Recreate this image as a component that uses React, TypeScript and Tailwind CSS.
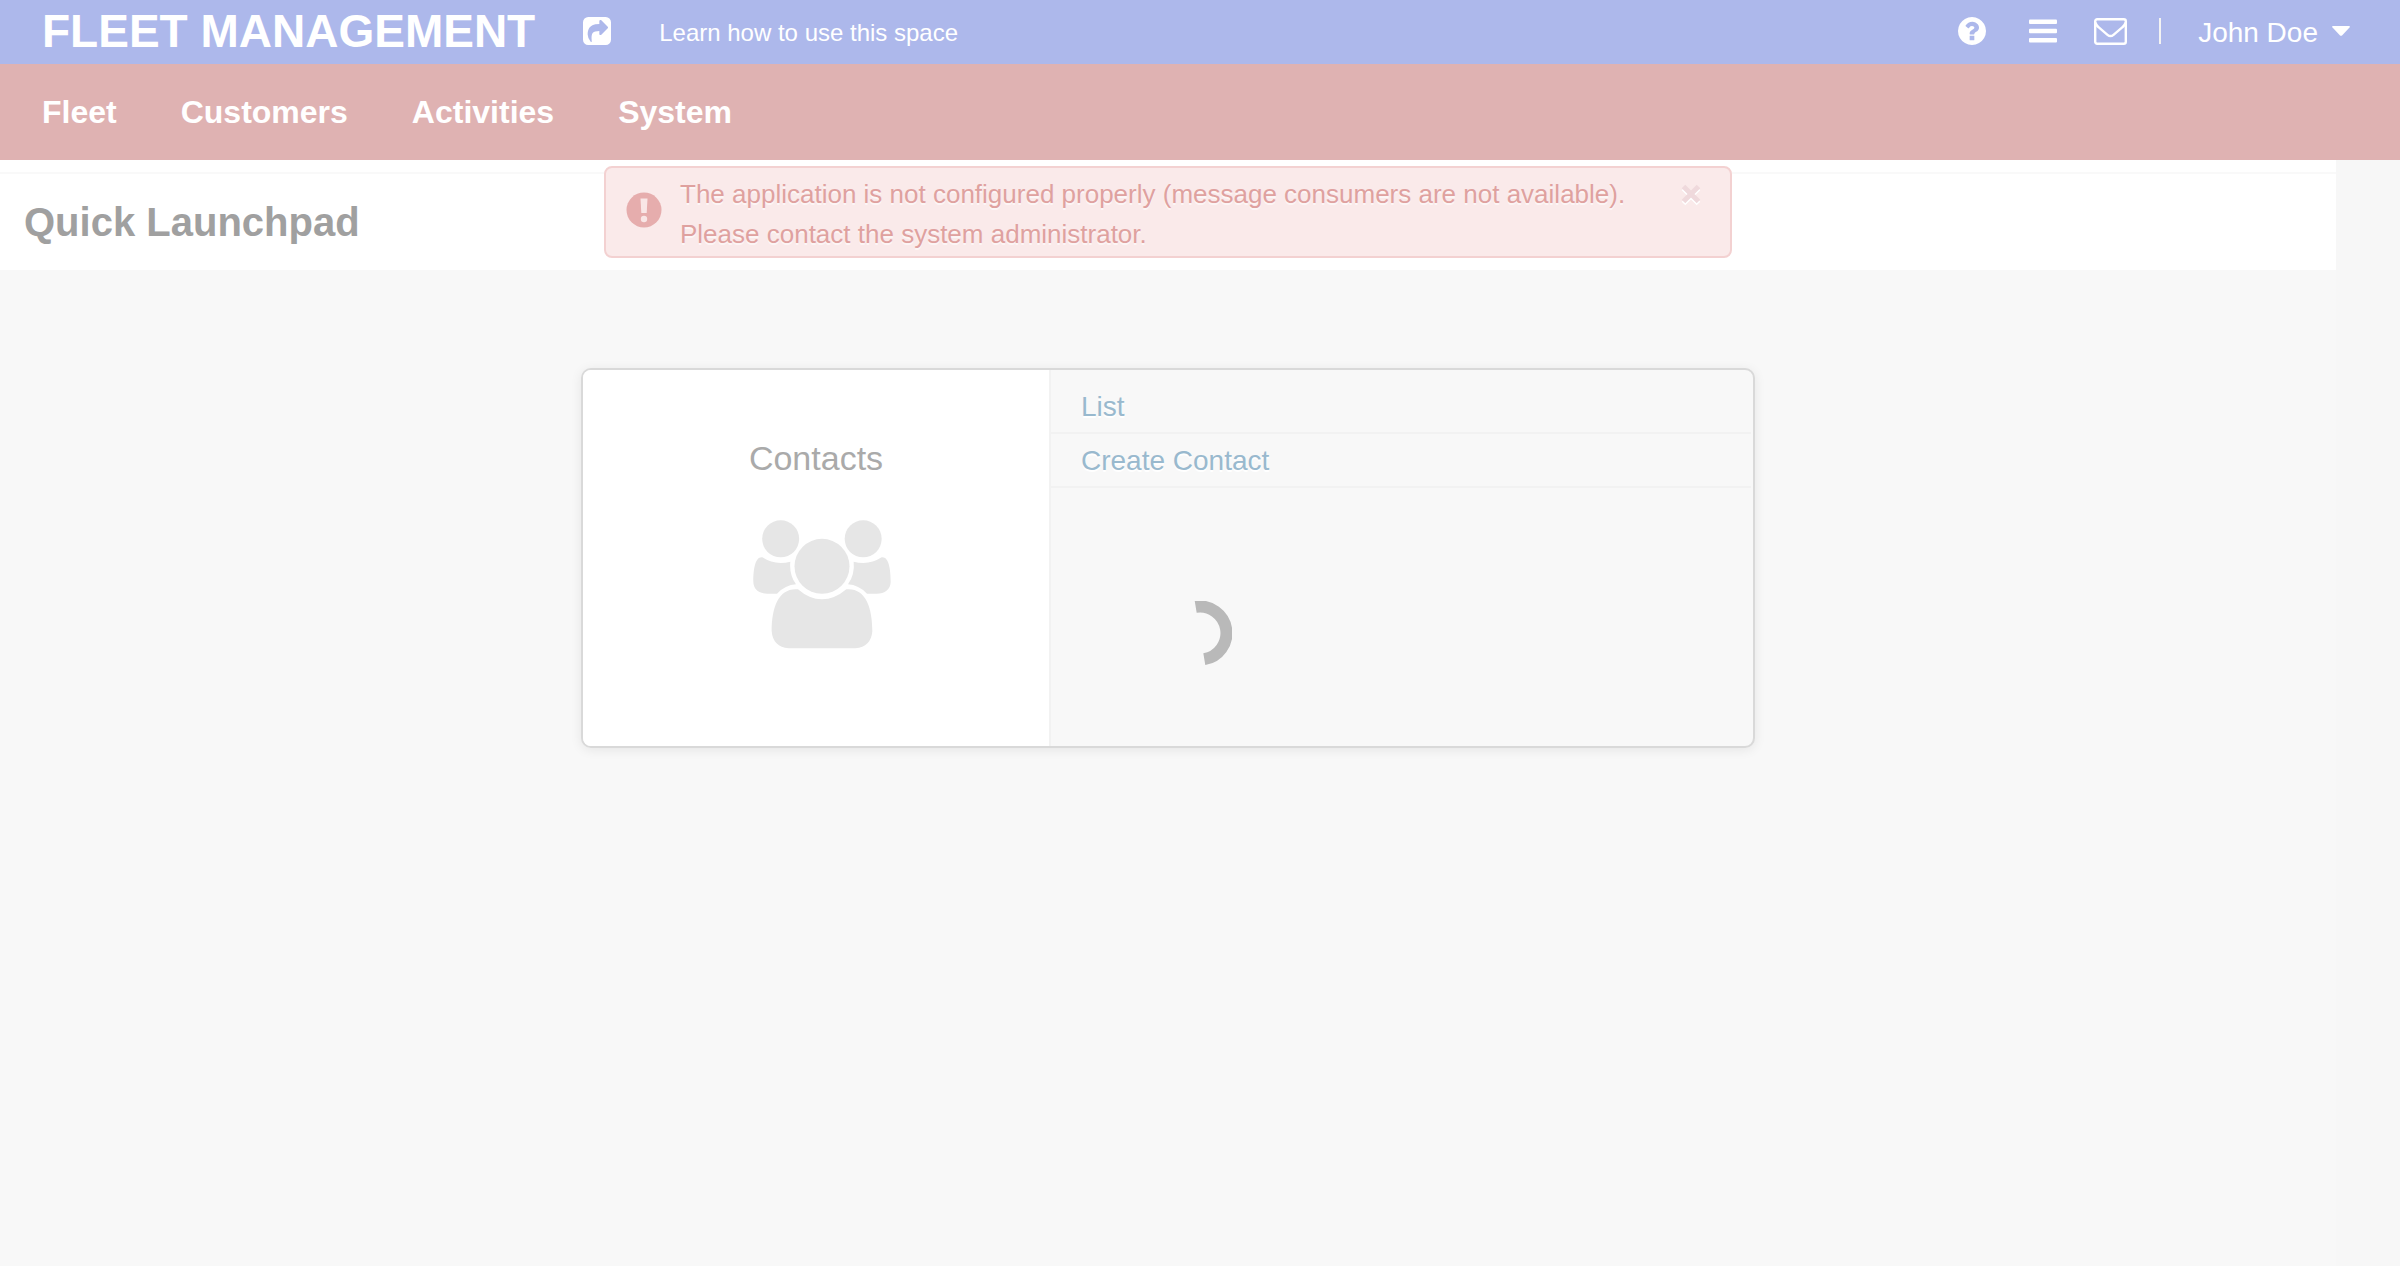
import type { ReactNode } from "react";

const NAV_ITEMS = ["Fleet", "Customers", "Activities", "System"];
const CONTACT_LINKS = ["List", "Create Contact"];

function ShareIcon() {
  return (
    <svg viewBox="0 0 1536 1536" className="size-7 fill-current" fillRule="evenodd" aria-hidden="true">
      <path d="M1005 973l352-352q19-19 19-45t-19-45l-352-352q-30-31-69-14-40 17-40 59v160q-119 0-216 19.5t-162.5 51-114 79-76.5 95.5-44.5 109-21.5 111.5-5 110.5q0 181 167 404 10 12 25 12 7 0 13-3 22-9 19-33-44-354 62-473 46-52 130-75.5t224-23.5v160q0 42 40 59 12 5 24 5 26 0 45-19zM1536 288v960q0 119-84.5 203.5t-203.5 84.5h-960q-119 0-203.5-84.5t-84.5-203.5v-960q0-119 84.5-203.5t203.5-84.5h960q119 0 203.5 84.5t84.5 203.5z" />
    </svg>
  );
}

function HelpIcon() {
  return (
    <svg viewBox="128 128 1536 1536" className="size-7 fill-current" aria-hidden="true">
      <path d="M1024 1376v-192q0-14-9-23t-23-9h-192q-14 0-23 9t-9 23v192q0 14 9 23t23 9h192q14 0 23-9t9-23zm256-672q0-88-55.5-163t-138.5-116-170-41q-243 0-371 213-15 24 8 42l132 100q7 6 19 6 16 0 25-12 53-68 86-92 34-24 86-24 48 0 85.5 26t37.5 59q0 38-20 61t-68 45q-63 28-115.5 86.5t-52.5 125.5v36q0 14 9 23t23 9h192q14 0 23-9t9-23q0-19 21.5-49.5t54.5-49.5q32-18 49-28.5t46-35 44.5-48 28-60.5 12.5-81zm384 192q0 209-103 385.5t-279.5 279.5-385.5 103-385.5-103-279.5-279.5-103-385.5 103-385.5 279.5-279.5 385.5-103 385.5 103 279.5 279.5 103 385.5z" />
    </svg>
  );
}

function MenuIcon() {
  return (
    <svg viewBox="0 0 28 28" className="size-7 fill-current" aria-hidden="true">
      <rect x="0" y="2.500" width="28" height="4.600" rx="1" />
      <rect x="0" y="11.700" width="28" height="4.600" rx="1" />
      <rect x="0" y="20.900" width="28" height="4.600" rx="1" />
    </svg>
  );
}

function MailIcon() {
  return (
    <svg
      viewBox="0 0 33 27"
      className="h-[27px] w-[33px] stroke-current"
      fill="none"
      strokeWidth="2.400"
      strokeLinejoin="round"
      aria-hidden="true"
    >
      <rect x="1.200" y="1.200" width="30.600" height="24.600" rx="2" />
      <path d="M1.500 4.500Q2 7.200 4.500 9.200L13.500 16.800Q16.500 19.400 19.500 16.800L28.500 9.200Q31 7.200 31.500 4.500" />
    </svg>
  );
}

function PeopleIcon() {
  return (
    <svg viewBox="548 509 414 387" className="h-[129px] w-[138px] fill-[#e6e6e6]" aria-hidden="true">
      <circle cx="631" cy="565.500" r="55.500" />
      <circle cx="878.500" cy="565.500" r="55.500" />
      <circle cx="755" cy="648" r="82.500" />
      <path d="M576 621Q602 638 631 638Q646 638 660 634Q656 672 677 702Q645 704 620 730H592C566 730 549 716 549 694C549 652 556 618 576 621Z" />
      <path d="M934 621Q908 638 879 638Q864 638 850 634Q854 672 833 702Q865 704 890 730H918C944 730 961 716 961 694C961 652 954 618 934 621Z" />
      <path d="M683 717Q717 747 755 747Q793 747 828 717C885 712 906 770 906 843Q902 890 855 894H655Q608 890 604 843C604 770 625 712 683 717Z" />
    </svg>
  );
}

function AlertIcon() {
  return (
    <svg viewBox="0 0 36 36" className="mt-[18px] size-9 shrink-0" aria-hidden="true">
      <circle cx="18" cy="18" r="17.500" fill="#e6adad" />
      <path d="M14.500 6.500h7l-.8 14.500h-5.400z" fill="#f9e6e6" />
      <circle cx="18" cy="27" r="3.200" fill="#f9e6e6" />
    </svg>
  );
}

function IconButton({ label, children }: { label: string; children: ReactNode }) {
  return (
    <button type="button" aria-label={label} className="flex cursor-pointer items-center">
      {children}
    </button>
  );
}

function TopBar() {
  return (
    <header className="flex h-16 items-center bg-[#adb8eb] pb-0.5 pl-[42px] pr-[50px] text-white">
      <a href="#home" className="text-[46px] font-bold leading-[60px]">
        FLEET MANAGEMENT
      </a>
      <div className="ml-12">
        <IconButton label="Share">
          <ShareIcon />
        </IconButton>
      </div>
      <a href="#learn" className="ml-12 pt-1 text-2xl">
        Learn how to use this space
      </a>
      <div className="ml-auto flex items-center">
        <IconButton label="Help">
          <HelpIcon />
        </IconButton>
        <div className="ml-[43px]">
          <IconButton label="Menu">
            <MenuIcon />
          </IconButton>
        </div>
        <div className="ml-[37px]">
          <IconButton label="Messages">
            <MailIcon />
          </IconButton>
        </div>
        <span className="ml-8 h-[26px] w-0.5 bg-[#f3f3f3]" />
        <button type="button" className="ml-[37px] flex cursor-pointer items-center gap-[14px] text-[28px] leading-8">
          <span className="pt-1">John Doe</span>
          <svg viewBox="0 0 18 10" className="h-[10px] w-[18px] fill-current" aria-hidden="true">
            <path d="M1 0H17Q18.500 .4 17.500 1.500L10 9.400Q9 10.200 8 9.400L.5 1.500Q-.5 .4 1 0Z" />
          </svg>
        </button>
      </div>
    </header>
  );
}

function MainNav() {
  return (
    <nav className="flex h-24 items-center gap-16 bg-[#dfb2b2] pl-[42px] text-[32px] font-bold leading-10 text-white">
      {NAV_ITEMS.map((item) => (
        <a key={item} href={`#${item.toLowerCase()}`}>
          {item}
        </a>
      ))}
    </nav>
  );
}

function AlertMessage() {
  return (
    <div
      role="alert"
      className="absolute left-1/2 top-1.5 flex w-[1128px] max-w-full -translate-x-1/2 items-start rounded-lg border-2 border-[#f3d1d1] bg-[#faeaea] pb-0.5 pl-5 pr-[29px] pt-1.5 text-[26px] leading-10 text-[#dfa19f] [text-shadow:0_2px_0_rgba(255,255,255,0.6)]"
    >
      <AlertIcon />
      <p className="ml-[18px] flex-1">
        The application is not configured properly (message consumers are not available).
        <br />
        Please contact the system administrator.
      </p>
      <button type="button" aria-label="Close" className="flex cursor-pointer pt-[10px]">
        <svg viewBox="0 0 20 22" className="h-[22px] w-5" fill="none" strokeWidth="5" aria-hidden="true">
          <path d="M2.500 4.500l15 15m0-15l-15 15" stroke="#ffffff" />
          <path d="M2.500 2.500l15 15m0-15l-15 15" stroke="#efd9dc" />
        </svg>
      </button>
    </div>
  );
}

function ContactsCard() {
  return (
    <section className="mx-auto mt-[98px] flex min-h-[380px] w-[1174px] max-w-full overflow-hidden rounded-[10px] border-2 border-[#d9d9d9] bg-[#f8f8f8] shadow-[0_2px_12px_rgba(0,0,0,0.08)]">
      <div className="flex w-2/5 flex-col items-center border-r-2 border-[#f2f2f2] bg-white pt-[66px]">
        <h2 className="text-[34px] leading-[44px] text-[#aaaaaa]">Contacts</h2>
        <div className="mt-10 pl-3">
          <PeopleIcon />
        </div>
      </div>
      <ul className="mr-0.5 flex-1 pt-[10px] text-[28px] leading-[50px] text-[#99b9ce] [text-shadow:0_2px_0_#ffffff]">
        {CONTACT_LINKS.map((link) => (
          <li key={link} className="border-b-2 border-[#f2f2f2] pl-[30px] pt-0.5">
            <a href={`#${link.toLowerCase().replace(" ", "-")}`}>{link}</a>
          </li>
        ))}
      </ul>
    </section>
  );
}

function LoadingSpinner() {
  return (
    <div role="status" aria-label="Loading" className="pointer-events-none fixed inset-0 flex items-center justify-center">
      <svg viewBox="0 0 64 64" className="size-16" fill="none" aria-hidden="true">
        <path d="M27.700 5.900A26.400 26.400 0 0 1 36.300 58.100" stroke="#b9b9b9" strokeWidth="12" />
      </svg>
    </div>
  );
}

export default function App() {
  return (
    <div className="flex min-h-screen flex-col bg-[#f7f7f7] font-['Liberation_Sans',Arial,sans-serif]">
      <TopBar />
      <MainNav />
      <main className="relative mr-16 flex-1 bg-[#f8f8f8]">
        <div className="h-3 bg-white" />
        <div className="border-t-2 border-[#f9f9f9] bg-white pb-6 pl-6 pt-6">
          <h1 className="text-[40px] font-bold leading-[48px] text-[#a0a0a0]">Quick Launchpad</h1>
        </div>
        <AlertMessage />
        <ContactsCard />
      </main>
      <LoadingSpinner />
    </div>
  );
}
